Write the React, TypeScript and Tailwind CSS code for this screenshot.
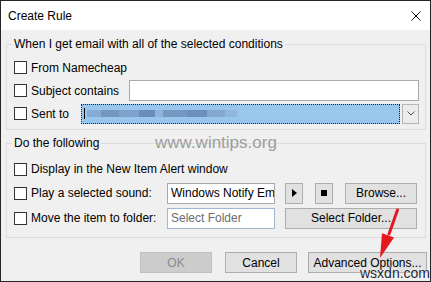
import React from 'react';

const Check = () => <div className="w-[13px] h-[13px] border border-[#333] bg-white mr-[4px] shrink-0" />;

const Btn = ({ label, w, disabled }: { label: string; w: string; disabled?: boolean }) => (
  <div
    className={`${w} h-[21px] flex items-center justify-center border ${
      disabled ? 'bg-[#cccccc] border-[#bfbfbf] text-[#8a8a8a]' : 'bg-[#e1e1e1] border-[#adadad] text-black'
    }`}
  >
    {label}
  </div>
);

export default function App() {
  return (
    <div className="relative w-[431px] h-[282px] overflow-hidden border border-[#262626] bg-[#f0f0f0] font-['Liberation_Sans',Arial,sans-serif] text-[12px] text-black leading-none">
      {/* title bar */}
      <div className="h-[29px] bg-white flex items-center pl-[7px] pr-[9px]">
        <span className="text-[12px]">Create Rule</span>
        <svg className="ml-auto" width="10" height="10" viewBox="0 0 10 10">
          <path d="M0.5 0.5 L9.5 9.5 M9.5 0.5 L0.5 9.5" stroke="#111" strokeWidth="1" />
        </svg>
      </div>

      <div className="pl-[5px] pr-[4px]">
        <fieldset className="mt-[6px] border border-[#dcdcdc] pl-[7px] pr-[6px] pt-[4px] pb-[4px]">
          <legend className="ml-[-2px] px-[2px] leading-[16px]">When I get email with all of the selected conditions</legend>
          <div className="flex items-center h-[23px]">
            <Check />
            <span>From Namecheap</span>
          </div>
          <div className="flex items-center h-[23px]">
            <Check />
            <span>Subject contains</span>
            <div className="ml-auto w-[290px] h-[21px] border border-[#a9a9a9] bg-white" />
          </div>
          <div className="flex items-center h-[23px]">
            <Check />
            <span>Sent to</span>
            <div className="ml-auto w-[338px] h-[20px] flex gap-[2px]">
              <div className="flex-1 relative bg-[#99c6ec] border border-dotted border-[#222] flex items-center pl-[2px]">
                <div className="w-[1px] h-[11px] bg-black" />
                <div className="flex items-center h-[8px] ml-[2px] gap-0">
                  <div className="w-[14px] h-[7px] bg-[#86abd4]" />
                  <div className="w-[18px] h-[7px] bg-[#7497c2]" />
                  <div className="w-[20px] h-[7px] bg-[#7ea2cb]" />
                  <div className="w-[16px] h-[7px] bg-[#6a8dbb]" />
                  <div className="w-[8px] h-[7px] bg-[#8fb4dc]" />
                  <div className="w-[24px] h-[7px] bg-[#7699c4]" />
                  <div className="w-[20px] h-[7px] bg-[#6b8ebc]" />
                  <div className="w-[18px] h-[7px] bg-[#84a8d2]" />
                  <div className="w-[12px] h-[7px] bg-[#91b6de]" />
                </div>
              </div>
              <div className="w-[17px] border border-[#b5b5b5] bg-[#ececec] flex items-center justify-center">
                <svg width="8" height="5" viewBox="0 0 8 5">
                  <path d="M0.5 0.5 L4 4 L7.5 0.5" stroke="#555" fill="none" strokeWidth="1" />
                </svg>
              </div>
            </div>
          </div>
        </fieldset>

        <fieldset className="mt-[5px] border border-[#dcdcdc] pl-[7px] pr-[6px] pt-[6px] pb-[6px]">
          <legend className="ml-[-2px] px-[2px] leading-[16px]">Do the following</legend>
          <div className="flex items-center h-[24px]">
            <Check />
            <span>Display in the New Item Alert window</span>
          </div>
          <div className="flex items-center h-[24px]">
            <Check />
            <span className="w-[136px]">Play a selected sound:</span>
            <div className="w-[108px] h-[21px] border border-[#a9a9a9] bg-white flex items-center pl-[3px] overflow-hidden whitespace-nowrap">
              Windows Notify Em
            </div>
            <div className="ml-[10px] w-[18px] h-[21px] border border-[#adadad] bg-[#e1e1e1] flex items-center justify-center">
              <svg width="5" height="8" viewBox="0 0 5 8">
                <path d="M0 0 L5 4 L0 8 Z" fill="#000" />
              </svg>
            </div>
            <div className="ml-[12px] w-[18px] h-[21px] border border-[#adadad] bg-[#e1e1e1] flex items-center justify-center">
              <div className="w-[6px] h-[6px] bg-black" />
            </div>
            <div className="ml-[12px]">
              <Btn label="Browse..." w="w-[72px]" />
            </div>
          </div>
          <div className="flex items-center h-[26px]">
            <Check />
            <span className="w-[136px]">Move the item to folder:</span>
            <div className="w-[108px] h-[21px] border border-[#9fb8d6] bg-white flex items-center pl-[3px] text-[#6d6d6d]">
              Select Folder
            </div>
            <div className="ml-[10px]">
              <Btn label="Select Folder..." w="w-[132px]" />
            </div>
          </div>
        </fieldset>
      </div>

      <div className="flex justify-end items-center mt-[14px] pr-[3px]">
        <Btn label="OK" w="w-[72px]" disabled />
        <div className="ml-[13px]">
          <Btn label="Cancel" w="w-[72px]" />
        </div>
        <div className="ml-[11px]">
          <Btn label="Advanced Options..." w="w-[119px]" />
        </div>
      </div>

      {/* watermarks and annotation */}
      <div className="absolute left-[154px] top-[132px] text-[17px] leading-[20px] text-[#9e9e9e] font-['Liberation_Sans',Arial,sans-serif]">
        www.wintips.org
      </div>
      <svg className="absolute left-0 top-0 pointer-events-none" width="431" height="282" viewBox="0 0 431 282">
        <path d="M396.5 209 L388 233" stroke="#e3191f" strokeWidth="3" strokeLinecap="round" />
        <path d="M379 257 L393 236.6 L381 232.2 Z" fill="#e3191f" />
      </svg>
      <div className="absolute left-[359px] top-[264px] text-[14px] leading-[16px] text-[#1c2430] [text-shadow:0_0_2px_#fff,0_0_2px_#fff]">
        wsxdn.com
      </div>
    </div>
  );
}
